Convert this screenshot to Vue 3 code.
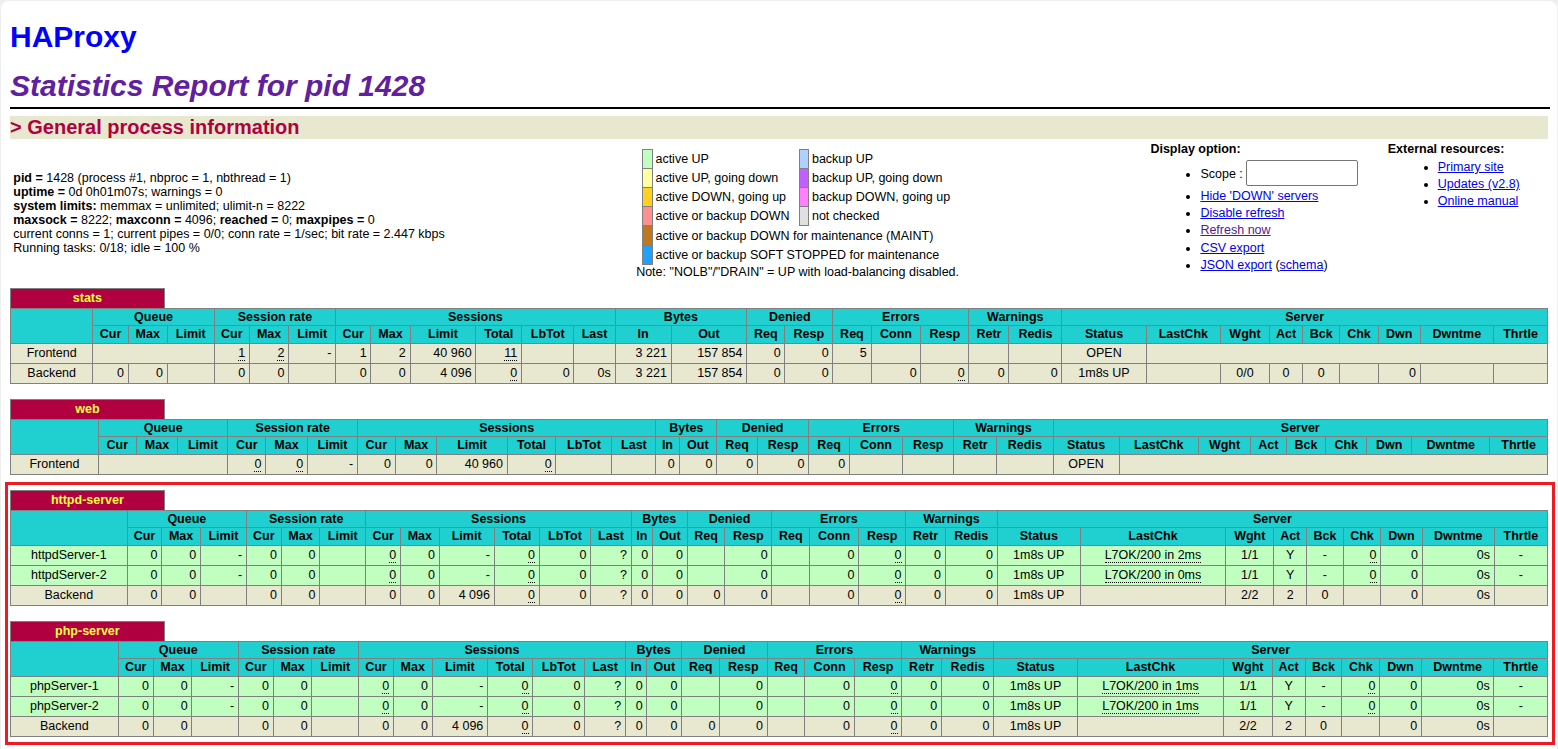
<script setup>
const head1 = [
  ['Queue', 3], ['Session rate', 3], ['Sessions', 6], ['Bytes', 2], ['Denied', 2],
  ['Errors', 3], ['Warnings', 2], ['Server', 9],
]
const head2 = ['Cur', 'Max', 'Limit', 'Cur', 'Max', 'Limit', 'Cur', 'Max', 'Limit', 'Total', 'LbTot', 'Last',
  'In', 'Out', 'Req', 'Resp', 'Req', 'Conn', 'Resp', 'Retr', 'Redis', 'Status', 'LastChk', 'Wght', 'Act', 'Bck', 'Chk', 'Dwn', 'Dwntme', 'Thrtle']

// Cell notation: "^" centred, "_" dotted underline, "N|" column span.
// "40 960" keeps its thousands gap through a letter-spaced last digit of the first group.
function cell(raw) {
  let s = raw
  let span = 1
  const m = s.match(/^(\d+)\|/)
  if (m) { span = +m[1]; s = s.slice(m[0].length) }
  const ac = s.startsWith('^')
  if (ac) s = s.slice(1)
  const u = s.startsWith('_')
  if (u) s = s.slice(1)
  const g = s.match(/^(\d*)(\d) (\d+)$/)
  return { span, ac, u, lead: g ? g[1] : '', rls: g ? g[2] : '', text: g ? g[3] : s }
}
function row(name, cls, str) {
  return { name, cls, cells: str.split(',').map(cell) }
}
function server(name, chk) {
  return row(name, 'up', `0,0,-,0,0,,_0,0,-,_0,0,?,0,0,,0,,0,_0,0,0,^1m8s UP,^_L7OK/200 in ${chk},^1/1,^Y,^-,_0,0,0s,^-`)
}
const backendPool = row('Backend', 'be', '0,0,,0,0,,0,0,4 096,_0,0,?,0,0,0,0,,0,_0,0,0,^1m8s UP,,^2/2,^2,^0,,0,0s,')

const tables = [
  { name: 'stats', rows: [
    row('Frontend', 'be', '3|,_1,_2,-,1,2,40 960,_11,,,3 221,157 854,0,0,5,,,,,^OPEN,8|'),
    row('Backend', 'be', '0,0,,0,0,,0,0,4 096,_0,0,0s,3 221,157 854,0,0,,0,_0,0,0,^1m8s UP,,^0/0,^0,^0,,0,,'),
  ] },
  { name: 'web', rows: [
    row('Frontend', 'be', '3|,_0,_0,-,0,0,40 960,_0,,,0,0,0,0,0,,,,,^OPEN,8|'),
  ] },
  { name: 'httpd-server', rows: [server('httpdServer-1', '2ms'), server('httpdServer-2', '0ms'), backendPool] },
  { name: 'php-server', rows: [server('phpServer-1', '1ms'), server('phpServer-2', '1ms'), backendPool] },
]

const legendPairs = [
  ['active-up', 'active UP', 'backup-up', 'backup UP'],
  ['active-going-down', 'active UP, going down', 'backup-going-down', 'backup UP, going down'],
  ['active-going-up', 'active DOWN, going up', 'backup-going-up', 'backup DOWN, going up'],
  ['active-down', 'active or backup DOWN\u00a0\u00a0', 'no-check', 'not checked'],
]
const legendWide = [
  ['maint', 'active or backup DOWN for maintenance (MAINT)\u00a0'],
  ['draining', 'active or backup SOFT STOPPED for maintenance\u00a0'],
]
</script>

<template>
  <div class="page">
    <h1 class="brand"><a href="#">HAProxy</a></h1>
    <h2 class="report">Statistics Report for pid 1428</h2>
    <div class="rule"></div>
    <h3 class="section">&gt; General process information</h3>

    <table class="info">
      <tbody>
        <tr>
          <td class="info-process">
            <b>pid = </b>1428 (process #1, nbproc = 1, nbthread = 1)<br>
            <b>uptime = </b>0d 0h01m07s; warnings = 0<br>
            <b>system limits:</b> memmax = unlimited; ulimit-n = 8222<br>
            <b>maxsock = </b>8222; <b>maxconn = </b>4096; <b>reached = </b>0; <b>maxpipes = </b>0<br>
            current conns = 1; current pipes = 0/0; conn rate = 1/sec; bit rate = 2.447 kbps<br>
            Running tasks: 0/18; idle = 100 %
          </td>
          <td class="info-legend">
            <table class="legend">
              <tbody>
                <tr v-for="p in legendPairs" :key="p[0]">
                  <td :class="p[0]">&nbsp;</td>
                  <td class="plain">{{ p[1] }}</td>
                  <td :class="p[2]">&nbsp;</td>
                  <td class="plain">{{ p[3] }}</td>
                </tr>
                <tr v-for="p in legendWide" :key="p[0]">
                  <td :class="p[0]">&nbsp;</td>
                  <td class="plain" colspan="3">{{ p[1] }}</td>
                </tr>
              </tbody>
            </table>
            Note: "NOLB"/"DRAIN" = UP with load-balancing disabled.
          </td>
          <td class="info-side">
            <b>Display option:</b>
            <ul>
              <li class="scope-row">Scope : <input class="scope" type="text"></li>
              <li><a href="#">Hide 'DOWN' servers</a></li>
              <li><a href="#">Disable refresh</a></li>
              <li><a href="#" class="visited">Refresh now</a></li>
              <li><a href="#">CSV export</a></li>
              <li><a href="#">JSON export</a> (<a href="#">schema</a>)</li>
            </ul>
          </td>
          <td class="info-side">
            <b>External resources:</b>
            <ul>
              <li><a href="#">Primary site</a></li>
              <li><a href="#">Updates (v2.8)</a></li>
              <li><a href="#">Online manual</a></li>
            </ul>
          </td>
        </tr>
      </tbody>
    </table>

    <section v-for="t in tables" :key="t.name" class="proxy">
      <table class="tbl">
        <tbody>
          <tr>
            <th class="pxname">{{ t.name }}</th>
            <th class="empty"></th>
          </tr>
        </tbody>
      </table>
      <table class="tbl">
        <thead>
          <tr class="titre">
            <th rowspan="2"></th>
            <th v-for="h in head1" :key="h[0]" :colspan="h[1]">{{ h[0] }}</th>
          </tr>
          <tr class="titre sub">
            <th v-for="(h, i) in head2" :key="i">{{ h }}</th>
          </tr>
        </thead>
        <tbody>
          <tr v-for="r in t.rows" :key="r.name" :class="r.cls">
            <td class="ac">{{ r.name }}</td>
            <td v-for="(c, i) in r.cells" :key="i" :colspan="c.span" :class="{ ac: c.ac }">
              <u v-if="c.u">{{ c.text }}</u>
              <template v-else>{{ c.lead }}<span v-if="c.rls" class="rls">{{ c.rls }}</span>{{ c.text }}</template>
            </td>
          </tr>
        </tbody>
      </table>
    </section>

    <div class="highlight"></div>
    <div class="frame"></div>
  </div>
</template>

<style>
html, body { margin: 0; padding: 0; background: #fff; overflow: hidden; }
</style>

<style scoped>
.page {
  position: relative;
  height: 749px;
  box-sizing: border-box;
  padding: 20px 10px 0;
  font-family: "Liberation Sans", Arial, sans-serif;
  font-size: 15px;
  color: #000;
  overflow: hidden;
}
.brand { margin: 0 0 14px; font-size: 30px; font-weight: bold; line-height: 34.5px; }
.brand a { color: #00f; text-decoration: none; }
.report { margin: 0; font-size: 30px; font-weight: bold; font-style: italic; color: #6020a0; line-height: 34.5px; }
.rule { height: 2px; margin: 4px -2px 7px 0; background: #000; }
.section { margin: 0; font-size: 20px; font-weight: bold; line-height: 23px; color: #b00040; background: #e8e8d0; }

.info { width: 100%; border-spacing: 2.5px; }
.info td { font-size: 12.5px; padding: 1.25px; }
.info-process { width: 1%; white-space: nowrap; text-align: left; vertical-align: middle; }
.info-legend { white-space: nowrap; text-align: center; vertical-align: middle; }
.info-side { width: 1%; white-space: nowrap; text-align: left; vertical-align: top; }
.info-side ul { margin: 3.75px 0 13px; padding-left: 50px; }
.info-side li { margin-top: 3.125px; margin-right: 25px; }
.info-side a { color: #00e; }
.info-side a.visited { color: #551a8b; }
.scope-row { height: 26px; line-height: 28px; }
.scope {
  width: 112px;
  height: 26px;
  box-sizing: border-box;
  padding: 1px 2px;
  border: 1px solid #767676;
  border-radius: 2px;
  background: #fff;
  vertical-align: top;
  font-size: 16px;
}

.info .legend { margin: 1px auto 0; border-collapse: collapse; }
.info .legend td { border: 1px solid gray; padding: 2px 2.5px; }
.info .legend td.plain { border: none; text-align: left; white-space: nowrap; }
.info .legend td.maint, .info .legend td.maint + td.plain { padding-top: 2.6px; }
.active-up { background: #c0ffc0; }
.active-going-down { background: #ffffa0; }
.active-going-up { background: #ffd020; }
.active-down { background: #ff9090; }
.backup-up { background: #b0d0ff; }
.backup-going-down { background: #c060ff; }
.backup-going-up { background: #ff80ff; }
.no-check { background: #e0e0e0; }
.maint { background: #c07820; }
.draining { background: #20a0ff; }

.proxy { margin-bottom: 15px; }
.proxy:last-of-type { margin-bottom: 0; }
.tbl { width: 100%; border-collapse: collapse; }
.tbl th, .tbl td { font-size: 12.5px; border: 1px solid gray; }
.tbl th { padding: 1.25px; font-weight: bold; }
.tbl .sub th { padding: 0.25px 1.25px 2.25px; }
.tbl td { padding: 2.5px 3.75px; text-align: right; white-space: nowrap; }
.tbl td.ac { text-align: center; }
.tbl th.pxname {
  width: 10%;
  padding: 2.5px 3.75px;
  background: #b00040;
  color: #ffff40;
  border-bottom: none;
  white-space: nowrap;
}
.tbl th.empty { width: 90%; border: none; background: #fff; }
.titre { background: #20d0d0; color: #000; text-align: center; }
.be { background: #e8e8d0; }
.up { background: #c0ffc0; }
.rls { letter-spacing: 0.2em; margin-right: 1px; }
u { text-decoration: none; border-bottom: 1px dotted #000; }

.highlight {
  position: absolute;
  left: 5px;
  top: 482px;
  width: 1550px;
  height: 263px;
  box-sizing: border-box;
  border: 3px solid #ed1c24;
  pointer-events: none;
}
.frame {
  position: absolute;
  inset: 0 0 -12px;
  border: 1px solid #eee;
  border-radius: 9px 9px 0 0;
  box-shadow: 0 0 0 12px #eee;
  pointer-events: none;
}
</style>
